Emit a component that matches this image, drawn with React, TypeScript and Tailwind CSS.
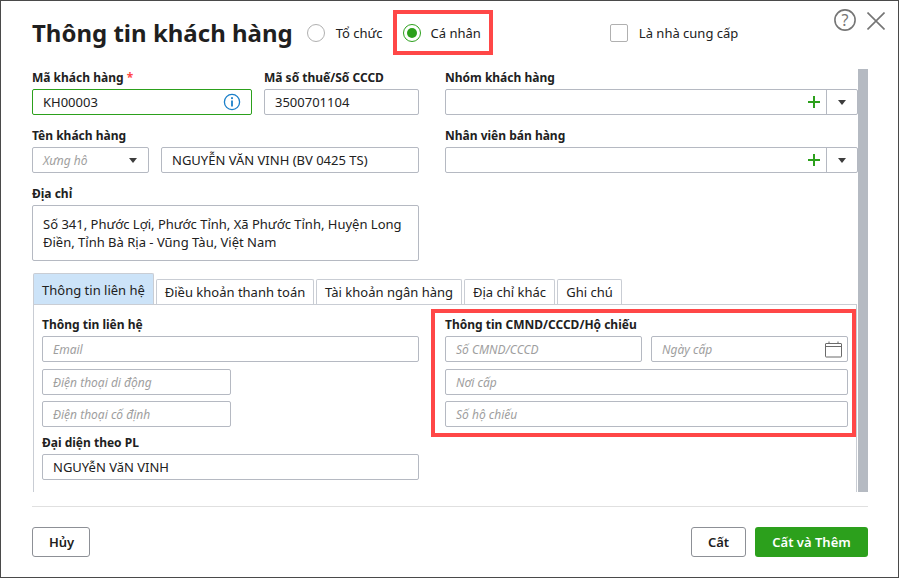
import React from "react";

const inputBase = "h-[26px] rounded-[2px] border border-[#b5b9c2] bg-white flex items-center px-[10px] text-[13px] text-[#212121] leading-none whitespace-nowrap";

function Label({ children }: { children: React.ReactNode }) {
  return <div className="h-[20px] leading-[18px] text-[12px] font-bold text-[#212121] whitespace-nowrap">{children}</div>;
}

function Box({ children, className = "" }: { children?: React.ReactNode; className?: string }) {
  return <div className={`${inputBase} ${className}`}>{children}</div>;
}

function Ph({ children }: { children: React.ReactNode }) {
  return <span className="mt-[2px] italic text-[12px] text-[#9e9e9e]">{children}</span>;
}

function Caret() {
  return (
    <svg width="8" height="5" viewBox="0 0 8 5"><path d="M0 0h8L4 5z" fill="#3d3d3d" /></svg>
  );
}

function ComboAdd() {
  return (
    <div className="h-[26px] rounded-[2px] border border-[#b5b9c2] bg-white flex justify-end items-stretch">
      <div className="w-[25px] flex items-center justify-start pl-[7px]">
        <svg width="12" height="12" viewBox="0 0 12 12"><path d="M6 0v12M0 6h12" stroke="#2ca01c" strokeWidth="2" /></svg>
      </div>
      <div className="w-[31px] border-l border-[#b5b9c2] flex items-center justify-center">
        <Caret />
      </div>
    </div>
  );
}

function Tab({ children, active = false, className = "" }: { children: React.ReactNode; active?: boolean; className?: string }) {
  return active ? (
    <div className={`h-[31px] pt-[3px] rounded-t-[2px] border border-b-0 border-[#c9cdd4] bg-[#cce3f8] flex items-center justify-center text-[13px] text-[#212121] whitespace-nowrap ${className}`}>{children}</div>
  ) : (
    <div className={`h-[25px] pt-px rounded-t-[2px] border border-b-0 border-[#c9cdd4] bg-white flex items-center justify-center text-[13px] text-[#212121] whitespace-nowrap ${className}`}>{children}</div>
  );
}

export default function App() {
  return (
    <div className="relative w-[899px] h-[578px] bg-white border border-[#4a4a4a] font-['Noto_Sans',sans-serif] text-[#212121] flex flex-col pl-[31px] pr-[30px] overflow-hidden">
      {/* header */}
      <div className="h-[68px] shrink-0 flex items-start relative">
        <div className="mt-[14px] text-[24px] font-bold leading-[36px] text-[#1f1f1f] whitespace-nowrap">Thông tin khách hàng</div>
        <div className="ml-[14px] mt-[23px] w-[18px] h-[18px] rounded-full border border-[#b0b0b0]" />
        <div className="ml-[11px] mt-[23px] text-[13px] leading-[18px]">Tổ chức</div>
        <div className="ml-[20px] mt-[23px] w-[18px] h-[18px] rounded-full border border-[#2ca01c] flex items-center justify-center">
          <div className="w-[10px] h-[10px] rounded-full bg-[#2ca01c]" />
        </div>
        <div className="ml-[10px] mt-[23px] text-[13px] leading-[18px]">Cá nhân</div>
        <div className="ml-[129px] mt-[23px] w-[18px] h-[18px] rounded-[2px] border border-[#b0b0b0]" />
        <div className="ml-[11px] mt-[23px] text-[13px] leading-[18px]">Là nhà cung cấp</div>
        <div className="ml-auto mt-[8px] flex items-start gap-[11px] mr-[-17px]">
          <svg width="22" height="22" viewBox="0 0 22 22" fill="none">
            <circle cx="11" cy="11" r="10.1" stroke="#757575" strokeWidth="1.6" />
            <text x="11" y="16.5" textAnchor="middle" fontSize="16" fill="#757575" fontFamily="Noto Sans">?</text>
          </svg>
          <svg width="18" height="18" viewBox="0 0 18 18" fill="none" className="mt-[3px]">
            <path d="M0.5 0.5l17 17M17.5 0.5l-17 17" stroke="#757575" strokeWidth="1.6" />
          </svg>
        </div>
      </div>

      {/* body */}
      <div className="h-[423px] shrink-0 flex">
        <div className="w-[826px] shrink-0 flex flex-col">
          <div className="flex gap-[26px]">
            <div className="w-[387px] shrink-0 flex flex-col gap-[12px]">
              <div className="flex gap-[12px]">
                <div className="w-[220px]">
                  <Label>Mã khách hàng <span className="text-[#ff4747]">*</span></Label>
                  <Box className="!border-[#2ca01c] justify-between !pr-[10px]">
                    <span>KH00003</span>
                    <svg width="18" height="18" viewBox="0 0 18 18" fill="none">
                      <circle cx="9" cy="9" r="7.6" stroke="#1a7fc9" strokeWidth="1.3" />
                      <rect x="8.1" y="7.5" width="1.8" height="6" fill="#1a7fc9" />
                      <rect x="8.1" y="4.2" width="1.8" height="1.9" fill="#1a7fc9" />
                    </svg>
                  </Box>
                </div>
                <div className="flex-1">
                  <Label>Mã số thuế/Số CCCD</Label>
                  <Box>3500701104</Box>
                </div>
              </div>
              <div>
                <Label>Tên khách hàng</Label>
                <div className="flex gap-[12px]">
                  <Box className="w-[117px] justify-between !pr-[11px]"><Ph>Xưng hô</Ph><Caret /></Box>
                  <Box className="flex-1">NGUYỄN VĂN VINH (BV 0425 TS)</Box>
                </div>
              </div>
              <div>
                <Label>Địa chỉ</Label>
                <div className="h-[56px] rounded-[2px] border border-[#b5b9c2] px-[10px] py-[9px] text-[13px] leading-[18px] text-[#212121]">
                  Số 341, Phước Lợi, Phước Tỉnh, Xã Phước Tỉnh, Huyện Long Điền, Tỉnh Bà Rịa - Vũng Tàu, Việt Nam
                </div>
              </div>
            </div>
            <div className="flex-1 flex flex-col gap-[12px]">
              <div>
                <Label>Nhóm khách hàng</Label>
                <ComboAdd />
              </div>
              <div>
                <Label>Nhân viên bán hàng</Label>
                <ComboAdd />
              </div>
            </div>
          </div>

          {/* tabs */}
          <div className="mt-[12px] ml-px flex items-end gap-[2px]">
            <Tab active className="w-[121px]">Thông tin liên hệ</Tab>
            <Tab className="w-[158px]">Điều khoản thanh toán</Tab>
            <Tab className="w-[146px]">Tài khoản ngân hàng</Tab>
            <Tab className="w-[91px]">Địa chỉ khác</Tab>
            <Tab className="w-[65px]">Ghi chú</Tab>
          </div>
          <div className="ml-px mr-px flex-1 border-t border-l border-r border-[#c9cdd4] pt-[11px] pl-[8px] pr-[8px] flex gap-[26px]">
            <div className="w-[377px] shrink-0">
              <Label>Thông tin liên hệ</Label>
              <Box><Ph>Email</Ph></Box>
              <Box className="w-[189px] mt-[7px]"><Ph>Điện thoại di động</Ph></Box>
              <Box className="w-[189px] mt-[6px]"><Ph>Điện thoại cố định</Ph></Box>
              <div className="mt-[7px]"><Label>Đại diện theo PL</Label></div>
              <Box>NGUYễN VăN VINH</Box>
            </div>
            <div className="flex-1">
              <Label>Thông tin CMND/CCCD/Hộ chiếu</Label>
              <div className="flex gap-[9px]">
                <Box className="w-[197px]"><Ph>Số CMND/CCCD</Ph></Box>
                <Box className="flex-1 justify-between !pr-[5px]">
                  <Ph>Ngày cấp</Ph>
                  <svg width="17" height="17" viewBox="0 0 17 17" fill="none" stroke="#6b6b6b" strokeWidth="1">
                    <rect x="0.5" y="2.5" width="16" height="13.5" rx="0.5" />
                    <path d="M0.5 5.5h16M4 0.5v2.5M13 0.5v2.5" />
                  </svg>
                </Box>
              </div>
              <Box className="mt-[7px]"><Ph>Nơi cấp</Ph></Box>
              <Box className="mt-[6px]"><Ph>Số hộ chiếu</Ph></Box>
            </div>
          </div>
        </div>
        <div className="w-[10px] shrink-0 bg-[#b5bac2]" />
      </div>

      {/* footer */}
      <div className="mt-[14px] border-t border-[#e0e0e0] pt-[20px] flex justify-between">
        <button className="w-[58px] h-[30px] pt-px pl-px rounded-[3px] border border-[#8d9096] bg-white text-[13px] font-semibold text-[#212121]">Hủy</button>
        <div className="flex gap-[9px]">
          <button className="w-[55px] h-[30px] pt-px rounded-[3px] border border-[#8d9096] bg-white text-[13px] font-semibold text-[#212121]">Cất</button>
          <button className="w-[113px] h-[30px] pt-px rounded-[3px] bg-[#2ca01c] text-[13px] font-semibold text-white">Cất và Thêm</button>
        </div>
      </div>

      {/* annotation overlays */}
      <div className="absolute left-[392px] top-[9px] w-[100px] h-[45px] border-[4px] border-[#ff4747] pointer-events-none" />
      <div className="absolute left-[430px] top-[308px] w-[425px] h-[128px] border-[4px] border-[#ff4747] pointer-events-none" />
    </div>
  );
}
